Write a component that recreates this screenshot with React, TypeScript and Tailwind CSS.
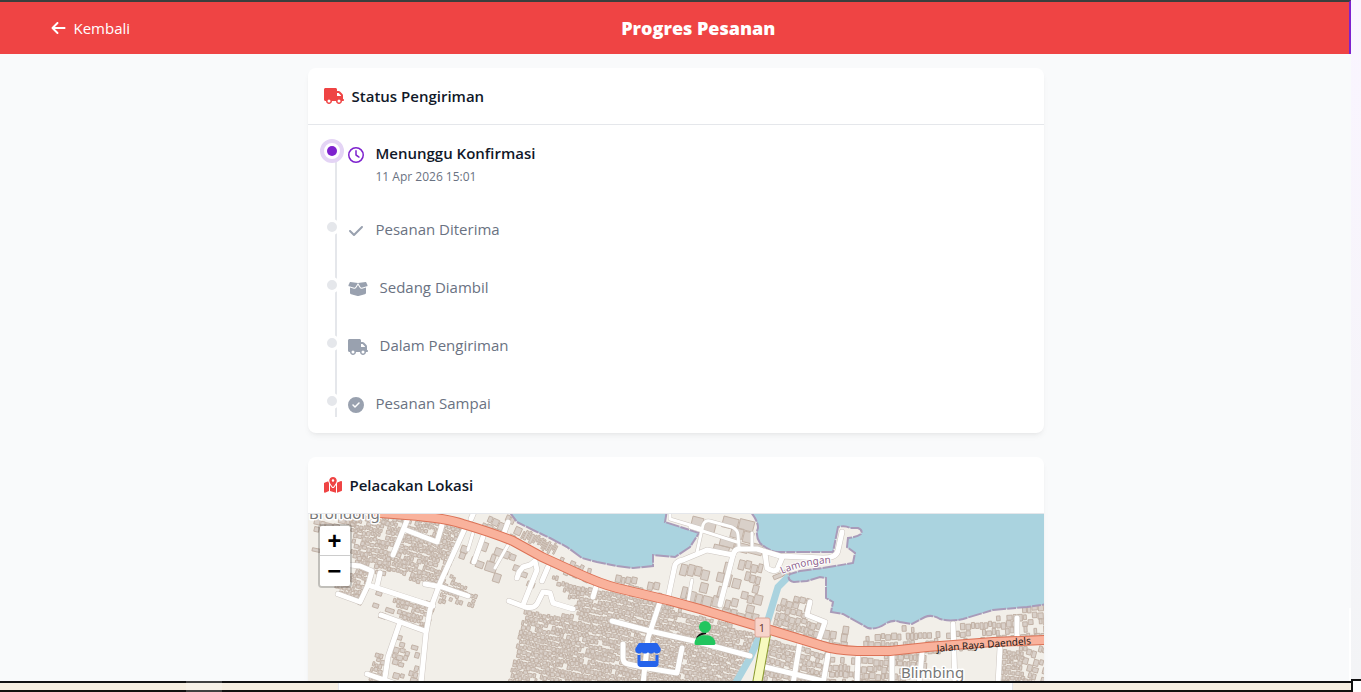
import {
  FaArrowLeft,
  FaBoxOpen,
  FaCheck,
  FaCircleCheck,
  FaMapLocationDot,
  FaRegClock,
  FaStore,
  FaTruck,
  FaUser,
} from "react-icons/fa6";

const steps = [
  { icon: FaRegClock, size: "w-4", title: "Menunggu Konfirmasi", date: "11 Apr 2026 15:01", active: true },
  { icon: FaCheck, size: "w-4", title: "Pesanan Diterima" },
  { icon: FaBoxOpen, size: "w-5", title: "Sedang Diambil" },
  { icon: FaTruck, size: "w-5", title: "Dalam Pengiriman" },
  { icon: FaCircleCheck, size: "w-4", title: "Pesanan Sampai" },
];

type Point = [number, number];

// Built-up areas: outline, street angle in degrees, share of plots with a house, plot size
const blocks: { area: Point[]; angle: number; fill: number; w: number; h: number }[] = [
  { area: [[350, 514], [404, 514], [394, 556], [384, 576], [366, 570], [352, 562]], angle: 12, fill: 0.93, w: 4, h: 5 },
  { area: [[408, 514], [464, 526], [440, 586], [428, 584], [384, 568], [396, 556]], angle: 15, fill: 0.96, w: 4, h: 5 },
  { area: [[312, 518], [352, 516], [352, 526], [312, 526]], angle: 12, fill: 0.6, w: 6, h: 6 },
  { area: [[310, 545], [320, 547], [318, 553], [308, 551]], angle: 12, fill: 0.8, w: 8, h: 5 },
  { area: [[340, 566], [372, 571], [362, 602], [330, 586]], angle: 14, fill: 0.92, w: 4, h: 5 },
  { area: [[390, 588], [434, 602], [424, 632], [398, 622], [396, 604]], angle: 16, fill: 0.86, w: 4, h: 5 },
  { area: [[374, 590], [396, 596], [390, 614], [356, 608], [358, 602]], angle: 18, fill: 0.45, w: 8, h: 6 },
  { area: [[376, 648], [384, 650], [382, 681], [366, 678]], angle: 15, fill: 0.92, w: 4, h: 5 },
  { area: [[394, 628], [420, 640], [415, 681], [388, 681]], angle: 15, fill: 0.5, w: 6, h: 6 },
  { area: [[444, 568], [476, 594], [472, 608], [436, 600]], angle: 20, fill: 0.7, w: 4, h: 5 },
  { area: [[466, 532], [486, 540], [480, 566], [464, 574], [456, 562]], angle: 20, fill: 0.5, w: 7, h: 9 },
  { area: [[484, 560], [500, 560], [496, 584], [482, 582]], angle: 18, fill: 0.9, w: 11, h: 11 },
  { area: [[488, 540], [520, 554], [512, 570], [492, 560]], angle: 20, fill: 0.5, w: 7, h: 8 },
  { area: [[484, 514], [510, 514], [520, 528], [516, 544], [480, 528]], angle: 24, fill: 0.75, w: 6, h: 8 },
  { area: [[526, 524], [560, 540], [556, 552], [518, 538]], angle: 26, fill: 1, w: 3, h: 10 },
  { area: [[560, 552], [582, 562], [592, 580], [572, 574], [556, 562]], angle: 24, fill: 0.88, w: 5, h: 7 },
  { area: [[584, 564], [660, 576], [665, 598], [620, 588], [586, 576]], angle: 12, fill: 0.72, w: 5, h: 8 },
  { area: [[520, 560], [545, 572], [540, 600], [514, 590]], angle: 20, fill: 0.35, w: 8, h: 7 },
  { area: [[550, 574], [596, 588], [664, 602], [757, 632], [750, 658], [736, 681], [508, 681], [524, 608], [552, 614], [574, 612], [574, 600]], angle: 12, fill: 0.97, w: 4, h: 5 },
  { area: [[680, 562], [730, 558], [718, 606], [672, 596]], angle: 14, fill: 0.6, w: 8, h: 12 },
  { area: [[668, 514], [752, 514], [756, 548], [700, 550], [700, 530]], angle: 14, fill: 0.8, w: 13, h: 11 },
  { area: [[738, 552], [764, 556], [760, 582], [752, 622], [722, 608]], angle: 14, fill: 0.78, w: 7, h: 10 },
  { area: [[765, 577], [782, 569], [784, 572], [767, 580]], angle: -22, fill: 1, w: 10, h: 6 },
  { area: [[778, 598], [800, 594], [812, 592], [806, 618], [826, 624], [818, 644], [768, 630]], angle: 16, fill: 0.9, w: 5, h: 7 },
  { area: [[824, 626], [846, 618], [852, 648], [820, 644]], angle: 8, fill: 0.6, w: 6, h: 9 },
  { area: [[856, 636], [884, 630], [900, 626], [946, 628], [950, 646], [890, 650], [856, 650]], angle: -2, fill: 0.78, w: 5, h: 7 },
  { area: [[956, 624], [984, 618], [1012, 610], [1044, 600], [1044, 638], [956, 646]], angle: -3, fill: 0.8, w: 5, h: 7 },
  { area: [[766, 638], [830, 654], [824, 681], [760, 681]], angle: 14, fill: 0.96, w: 5, h: 6 },
  { area: [[828, 654], [924, 652], [922, 670], [900, 681], [824, 681]], angle: 3, fill: 0.92, w: 5, h: 7 },
  { area: [[1000, 648], [1024, 646], [1022, 681], [1000, 681]], angle: 5, fill: 0.96, w: 4, h: 5 },
  { area: [[1024, 646], [1044, 644], [1044, 681], [1022, 681]], angle: 15, fill: 0.7, w: 5, h: 7 },
];

const inside = (x: number, y: number, area: Point[]) => {
  let hit = false;
  for (let i = 0, j = area.length - 1; i < area.length; j = i++) {
    const [xi, yi] = area[i];
    const [xj, yj] = area[j];
    if (yi > y !== yj > y && x < ((xj - xi) * (y - yi)) / (yj - yi) + xi) hit = !hit;
  }
  return hit;
};

const buildHouses = () => {
  let seed = 7;
  const rand = () => {
    seed = (seed * 16807) % 2147483647;
    return seed / 2147483647;
  };
  let d = "";
  for (const b of blocks) {
    const xs = b.area.map((p) => p[0]);
    const ys = b.area.map((p) => p[1]);
    const cx = (Math.min(...xs) + Math.max(...xs)) / 2;
    const cy = (Math.min(...ys) + Math.max(...ys)) / 2;
    const r = Math.max(Math.max(...xs) - cx, Math.max(...ys) - cy) + 20;
    const a = (b.angle * Math.PI) / 180;
    const at = (u: number, v: number): Point => [
      cx + u * Math.cos(a) - v * Math.sin(a),
      cy + u * Math.sin(a) + v * Math.cos(a),
    ];
    for (let v = -r; v < r; v += b.h) {
      let u = -r + rand() * 3;
      while (u < r) {
        const w = b.w * (0.7 + rand() * 0.6);
        const h = b.h * (0.8 + rand() * 0.3) - 1;
        const top = v + (rand() - 0.5) * b.h * 0.4;
        const [mx, my] = at(u, v);
        if (rand() < b.fill && inside(mx, my, b.area)) {
          const corners = [at(u, top), at(u + w - 1, top), at(u + w - 1, top + h), at(u, top + h)];
          d += "M" + corners.map((p) => `${p[0].toFixed(1)} ${p[1].toFixed(1)}`).join("L") + "Z";
        }
        u += w;
      }
    }
  }
  return d;
};

const houses = buildHouses();

const highway =
  "M370 512C400 515 440 516 463 524C480 529 498 535 513 541L542 557L577 573C590 579 605 585 617 588L667 600L700 609L757 626L823 646Q835 650 857 651L890 651L927 647L993 642L1046 640";

const streets = [
  "M408 518L393 555",
  "M406 530L437 542L442 525",
  "M465 528L440 583L430 610L426 633L421 684",
  "M425 584L442 587L468 596",
  "M350 565L360 566L372 571L368 585L360 602L338 594",
  "M380 573L377 586",
  "M368 585L433 606",
  "M381 615L425 631",
  "M400 622L388 657L384 684",
  "M367 674L396 684",
  "M483 537L474 562",
  "M508 522L504 533",
  "M474 512L471 519",
  "M517 578L519 572L523 567L530 565L535 561L537 570L523 605",
  "M509 601L525 607Q534 609 537 604L543 592L550 593L553 603L573 609",
  "M548 567L542 581",
  "M596 587L593 597",
  "M612 621L650 631L694 641L750 656",
  "M660 602L648 638L643 684",
  "M623 644L623 658Q623 663 628 664L647 668L677 673L682 648",
  "M668 598L675 565Q677 561 683 560L707 550L733 555Q735 548 741 549L757 549L780 556L823 558Q837 558 838 550L842 532",
  "M733 555L720 605",
  "M765 553L767 568Q772 572 777 570L782 558",
  "M810 602L807 615L825 622L818 642",
  "M800 642L793 684",
  "M828 655L823 684",
  "M858 655L857 684",
  "M765 667L823 681",
  "M892 655L892 684",
  "M922 653L919 684",
  "M953 624L955 684",
  "M1017 618L1017 637",
  "M1000 648L998 684",
];

const lanes = [
  "M473 533L468 550",
  "M508 545L495 568",
  "M670 512L670 519L700 528",
  "M697 552L703 525Q705 520 710 521L732 527Q738 530 738 535L739 547",
  "M690 527L737 542",
  "M752 533L752 547",
  "M692 580L688 602",
];

const shores = [
  "M508 510L517 522L533 530L550 538L567 547L582 558L597 562L617 566L633 568L653 566L653 555L675 557L690 547L699 533L665 522L667 510",
  "M749 510Q758 520 758 528Q755 536 760 543Q770 552 778 552L833 552L838 527Q845 525 850 528L858 528Q863 530 861 534Q857 537 848 538L847 547L855 553L853 563L823 568L800 571L790 574Q786 580 794 582L807 581L820 577L826 578L826 598L833 602L831 612L843 614L868 628Q876 630 885 624Q893 619 900 622L912 624L925 617Q932 614 940 619Q950 622 963 619L993 610L1027 607L1048 604",
];

const Map = () => (
  <svg
    viewBox="308 514 736 384"
    preserveAspectRatio="xMidYMin slice"
    className="block h-96 w-full bg-[#f2efe9]"
    fontFamily="'Noto Sans', sans-serif"
    role="img"
    aria-label="Peta lokasi pesanan"
  >
    <defs>
      <path id="lamongan" d="M782 574Q804 564 834 563" />
      <path id="daendels" d="M937 652L1044 643" />
    </defs>

    <path d={houses} fill="#d9d0c9" stroke="#c2b2a6" strokeWidth="1" />

    {/* Sea and canal */}
    <path d={shores[0] + "Z"} fill="#aad3df" />
    <path d={shores[1] + "V510Z"} fill="#aad3df" />
    <path d="M789 576L778 587L768 620L757 642L750 658L735 684" fill="none" stroke="#aad3df" strokeWidth="7" />
    {shores.map((d) => (
      <path key={d} d={d} fill="none" stroke="#a99bb9" strokeWidth="2" strokeDasharray="14 1 9 1" />
    ))}

    {/* Streets */}
    <g fill="none" strokeLinecap="round" strokeLinejoin="round">
      <g stroke="#cdc6c0">
        {streets.map((d) => <path key={d} d={d} strokeWidth="6" />)}
        {lanes.map((d) => <path key={d} d={d} strokeWidth="4" />)}
      </g>
      <g stroke="#ffffff">
        {streets.map((d) => <path key={d} d={d} strokeWidth="5" />)}
        {lanes.map((d) => <path key={d} d={d} strokeWidth="3" />)}
      </g>
    </g>
    <path d="M766 634L757 684" stroke="#8a9a2e" strokeWidth="10" />
    <path d="M766 634L757 684" stroke="#f7fabf" strokeWidth="8" />
    <path d={highway} fill="none" stroke="#dc7256" strokeWidth="10" />
    <path d={highway} fill="none" stroke="#f9b29c" strokeWidth="8" />

    {/* Labels */}
    <rect x="755" y="618" width="15" height="19" rx="2" fill="#f7d4cb" stroke="#dca698" />
    <text x="762" y="632" fontSize="11" textAnchor="middle" fill="#6b4038">1</text>
    <g stroke="#ffffff" strokeWidth="3" paintOrder="stroke" strokeLinejoin="round">
      <text fontSize="10" fill="#8d618b" strokeWidth="2">
        <textPath href="#lamongan">Lamongan</textPath>
      </text>
      <text x="309" y="519" fontSize="15" fill="#777777">Brondong</text>
      <text x="901" y="678" fontSize="15" fill="#777777">Blimbing</text>
    </g>
    <text fontSize="10" fill="#221a18">
      <textPath href="#daendels">Jalan Raya Daendels</textPath>
    </text>

    {/* Markers */}
    <FaStore x="634" y="643" className="h-6 w-7 text-[#2563eb]" />
    <path d="M697 639Q698 634 706 633" fill="none" stroke="#111111" strokeWidth="2" />
    <FaUser x="694" y="621" className="h-6 w-[22px] text-[#22c55e]" />
  </svg>
);

export default function App() {
  return (
    <div className="flex h-screen overflow-hidden bg-[#f9fafb] font-['Open_Sans',sans-serif] text-[15px] leading-6">
      <div className="flex min-w-0 flex-1 flex-col">
        <header className="border-t-2 border-r-2 border-t-[#3a3f3d] border-r-[#7e22ce] bg-[#ef4444] text-white">
          <div className="mx-auto flex h-[52px] max-w-7xl items-center justify-between px-4">
            <button type="button" className="flex items-center gap-2">
              <FaArrowLeft className="h-4 w-[15px]" />
              Kembali
            </button>
            <h1 className="text-lg font-extrabold">Progres Pesanan</h1>
            <div className="w-8" />
          </div>
        </header>

        <main className="relative min-h-0 flex-1 overflow-hidden">
          <div className="mx-auto flex max-w-3xl flex-col gap-6 px-4 pt-[14px]">
            <section className="rounded-lg bg-white shadow-md shadow-black/5">
              <h2 className="flex h-[57px] items-center gap-2 border-b border-gray-200 px-4 font-semibold text-gray-900">
                <FaTruck className="h-4 w-5 text-[#ef4444]" />
                Status Pengiriman
              </h2>
              <div className="p-4">
                <ol className="relative">
                  <li aria-hidden="true" className="absolute inset-y-0 left-[11px] w-0.5 bg-gray-200" />
                  {steps.map((step) => (
                    <li key={step.title} className="relative pb-8 pl-6 last:pb-0">
                      {step.active ? (
                        <span className="absolute -top-0.5 -left-1 flex size-6 items-center justify-center rounded-full border-4 border-[#e4d4f5] bg-white">
                          <span className="size-[10px] rounded-full bg-[#7e22ce]" />
                        </span>
                      ) : (
                        <span className="absolute top-[2px] left-0 size-4 rounded-full border-3 border-white bg-gray-200" />
                      )}
                      <div className="flex min-h-[26px] items-start gap-3">
                        <step.icon
                          className={`mt-[6px] h-4 ${step.size} ${step.active ? "text-[#7e22ce]" : "text-gray-400"}`}
                        />
                        <span className={step.active ? "font-semibold text-gray-900" : "text-gray-500"}>
                          {step.title}
                        </span>
                      </div>
                      {step.date && <p className="mt-0.5 pl-7 text-xs leading-4 text-gray-500">{step.date}</p>}
                    </li>
                  ))}
                </ol>
              </div>
            </section>

            <section className="overflow-hidden rounded-lg bg-white shadow-md shadow-black/5">
              <h2 className="flex h-[57px] items-center gap-2 border-b border-gray-200 px-4 font-semibold text-gray-900">
                <FaMapLocationDot className="h-4 w-[18px] text-[#ef4444]" />
                Pelacakan Lokasi
              </h2>
              <div className="relative">
                <Map />
                <div className="absolute top-[10px] left-[10px] flex flex-col overflow-hidden rounded-sm border-2 border-black/20 bg-clip-padding font-['Liberation_Mono',monospace] text-[24px] leading-[26px] font-bold text-black">
                  <button type="button" aria-label="Perbesar" className="h-[30px] w-[30px] border-b border-[#cccccc] bg-white pt-1">
                    +
                  </button>
                  <button type="button" aria-label="Perkecil" className="h-[30px] w-[30px] bg-white pt-1">
                    −
                  </button>
                </div>
              </div>
            </section>
          </div>
          <div className="absolute right-0 bottom-0 h-[73px] w-0.5 bg-white" />
        </main>

        {/* Window edge along the bottom */}
        <div className="relative flex h-[11px] border-y-2 border-[#111111] bg-[#f6eee1]">
          <div className="w-1/4" />
          <div className="w-1/2 border-x border-gray-200 bg-white" />
          <div className="absolute -inset-y-0.5 left-[186px] w-9 bg-white/20" />
        </div>
      </div>

      <div className="flex w-[10px] flex-col">
        <div className="flex-1 bg-linear-to-b from-[#faf5ff] to-[#f3f4f6]" />
        <div className="h-[13px] border-t-2 border-l-2 border-[#111111] bg-white" />
      </div>
    </div>
  );
}
